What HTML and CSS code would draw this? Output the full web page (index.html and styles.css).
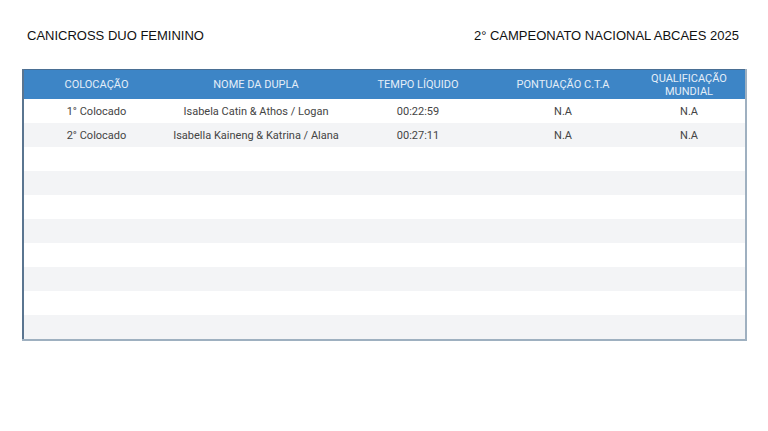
FILE: index.html
```html
<!DOCTYPE html>
<html lang="pt">
<head>
<meta charset="utf-8">
<link rel="stylesheet" href="styles.css">
</head>
<body>
<div class="page">
  <div class="titles">
    <span class="title">CANICROSS DUO FEMININO</span>
    <span class="title">2° CAMPEONATO NACIONAL ABCAES 2025</span>
  </div>
  <table class="results">
    <colgroup>
      <col class="c1"><col class="c2"><col class="c3"><col class="c4"><col class="c5">
    </colgroup>
    <thead>
      <tr>
        <th>COLOCAÇÃO</th>
        <th>NOME DA DUPLA</th>
        <th>TEMPO LÍQUIDO</th>
        <th>PONTUAÇÃO C.T.A</th>
        <th>QUALIFICAÇÃO<br>MUNDIAL</th>
      </tr>
    </thead>
    <tbody>
      <tr><td>1° Colocado</td><td>Isabela Catin &amp; Athos / Logan</td><td>00:22:59</td><td>N.A</td><td>N.A</td></tr>
      <tr><td>2° Colocado</td><td>Isabella Kaineng &amp; Katrina / Alana</td><td>00:27:11</td><td>N.A</td><td>N.A</td></tr>
      <tr><td></td><td></td><td></td><td></td><td></td></tr>
      <tr><td></td><td></td><td></td><td></td><td></td></tr>
      <tr><td></td><td></td><td></td><td></td><td></td></tr>
      <tr><td></td><td></td><td></td><td></td><td></td></tr>
      <tr><td></td><td></td><td></td><td></td><td></td></tr>
      <tr><td></td><td></td><td></td><td></td><td></td></tr>
      <tr><td></td><td></td><td></td><td></td><td></td></tr>
      <tr><td></td><td></td><td></td><td></td><td></td></tr>
    </tbody>
  </table>
</div>
</body>
</html>
```
FILE: styles.css
```css
html, body {
  margin: 0;
  padding: 0;
  background: #ffffff;
}
.page {
  padding: 28px 23px 0 22px;
}
.titles {
  display: flex;
  justify-content: space-between;
  padding: 0 6px 0 5px;
  height: 41px;
}
.title {
  font-family: "Liberation Sans", Arial, sans-serif;
  font-size: 13px;
  color: #111111;
  line-height: 16px;
}
.results {
  width: 723px;
  border-collapse: collapse;
  table-layout: fixed;
  font-family: Roboto, "Liberation Sans", sans-serif;
  font-size: 11px;
  border-left: 2px solid #5a7590;
  border-right: 2px solid #9fb0c0;
  border-bottom: 2px solid #9eb0c0;
  border-top: 1px solid #4a6f94;
}
.c1 { width: 146px; }
.c2 { width: 174px; }
.c3 { width: 150px; }
.c4 { width: 140px; }
.c5 { width: 113px; }
.results th {
  background: #3d85c6;
  color: #e4eef8;
  font-weight: 400;
  height: 29px;
  padding: 0;
  text-align: center;
  line-height: 13px;
}
.results td {
  height: 24px;
  padding: 0;
  text-align: center;
  color: #444444;
}
.results tbody tr:nth-child(even) td {
  background: #f3f4f6;
}
```
